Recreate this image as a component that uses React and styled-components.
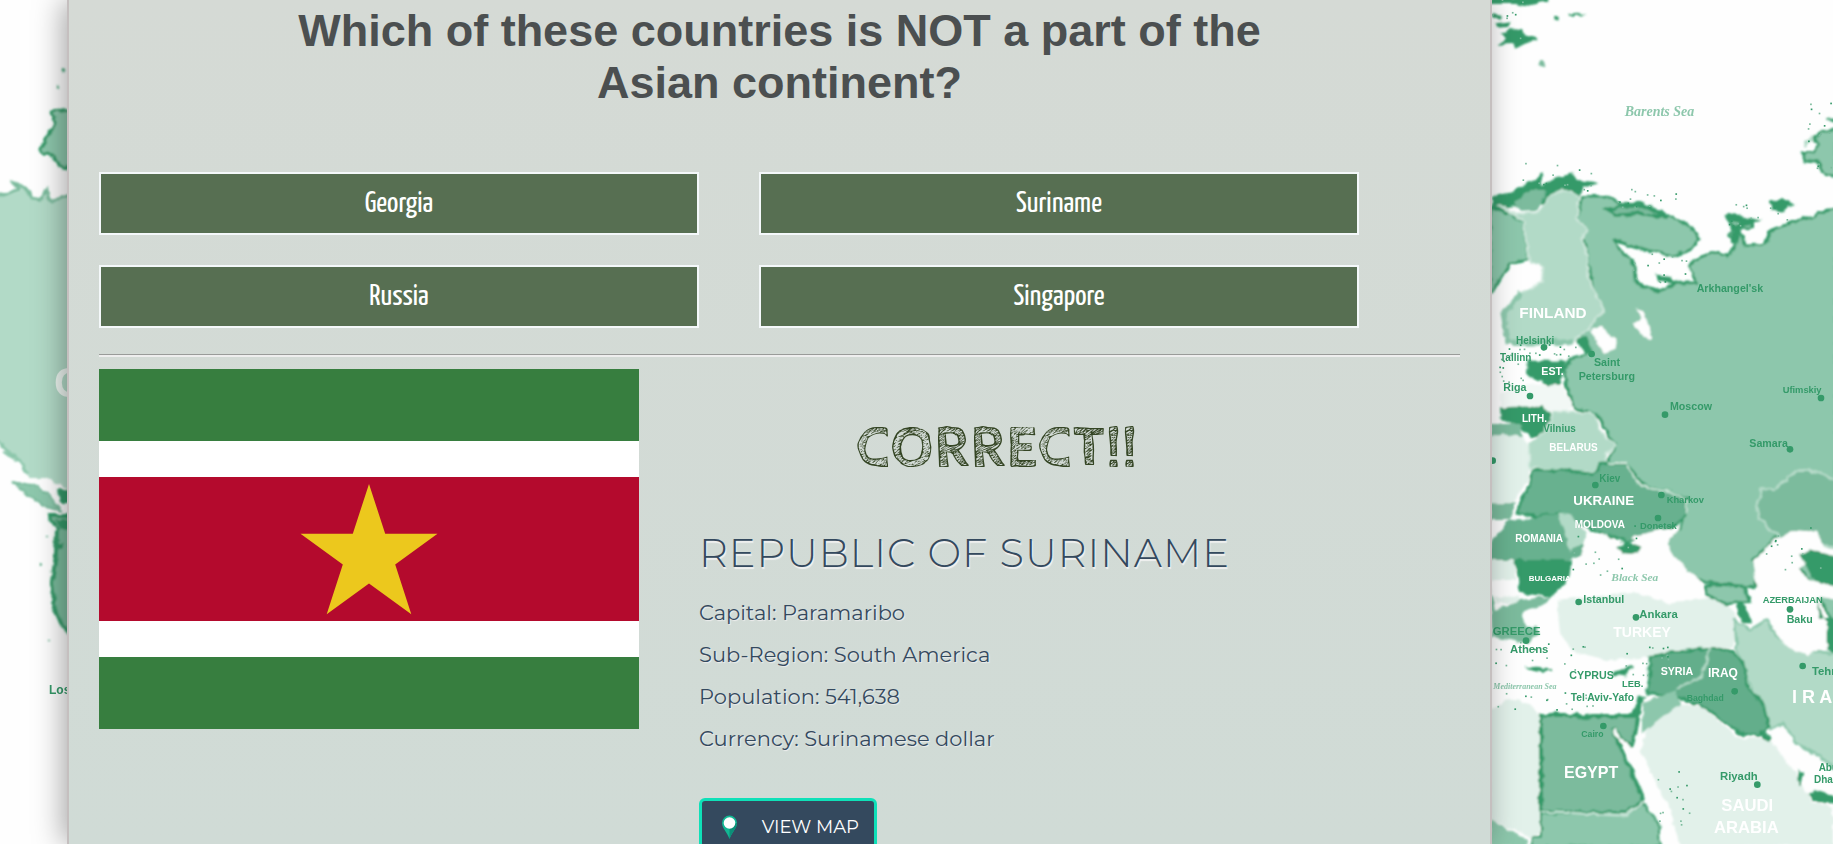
import React from "react";
import styled, { createGlobalStyle } from "styled-components";

const GlobalStyle = createGlobalStyle`
  *, *::before, *::after { box-sizing: border-box; }
  html, body { margin: 0; padding: 0; background: #fefefe; }
`;

const rounded = '"Montserrat", "Inter", "Liberation Sans", sans-serif';

const Page = styled.div`
  display: grid;
  grid-template-columns: 67px minmax(0, 1fr) 341px;
  grid-template-rows: minmax(0, 1fr);
  height: 100vh;
  overflow: hidden;
  background: #fefefe;
`;

const MapSide = styled.svg`
  display: block;
  width: 100%;
  height: 100%;
`;

const Panel = styled.main`
  position: relative;
  z-index: 1;
  padding: 0 30px 40px;
  border: solid #c5bfbf;
  border-width: 0 2px;
  background: linear-gradient(#d5dad5, #d0dbd6);
  box-shadow: -4px 0 28px rgba(0, 0, 0, 0.35);
`;

const Question = styled.h1`
  max-width: 1020px;
  margin: 0 auto;
  padding-top: 5px;
  color: #4b4f50;
  font: bold 45px/52px "Liberation Sans", Arial, sans-serif;
  text-align: center;
`;

const Answers = styled.div`
  display: grid;
  grid-template-columns: 1fr 1fr;
  gap: 30px 60px;
  margin: 63px 101px 26px 0;
`;

const Answer = styled.button`
  height: 63px;
  padding: 0;
  border: 2px solid #f4f8fa;
  background: #576f52;
  color: #fff;
  font: 30px/36px "Yanone Kaffeesatz", "Liberation Sans Narrow", sans-serif;
  cursor: pointer;
`;

const Divider = styled.hr`
  height: 3px;
  margin: 0 0 12px;
  border: 0;
  border-top: 1px solid #999b99;
  background: #eeeeee;
`;

const Result = styled.section`
  display: flex;
  align-items: flex-start;
  gap: 60px;
`;

const Flag = styled.svg`
  display: block;
  flex: 0 0 540px;
  height: 360px;
`;

const Details = styled.div`
  flex: 0 1 596px;
  padding-top: 46px;
`;

const Verdict = styled.h2`
  margin: 0;
  color: #344524;
  font: 700 60px/68px "Cabin Sketch", Lato, sans-serif;
  letter-spacing: 1px;
  text-align: center;
`;

const CountryName = styled.h3`
  margin: 44px 0 13px;
  color: #34495e;
  font: 300 40px/52px ${rounded};
  letter-spacing: 1px;
  text-shadow: 1px 2px 1px #f2f2f2;
  text-transform: uppercase;
  white-space: nowrap;
`;

const Facts = styled.ul`
  margin: 0 0 38px;
  padding: 0;
  list-style: none;
  color: #34495e;
  font: 400 21px/42px ${rounded};
  text-shadow: 1px 1px 1px #eeeeee;
`;

const MapButton = styled.button`
  display: flex;
  align-items: center;
  justify-content: space-between;
  width: 178px;
  height: 58px;
  padding: 0 15px 0 19px;
  border: 3px solid #0fe0b8;
  border-radius: 6px;
  background: #34495e;
  color: #fff;
  font: 400 18px/24px ${rounded};
  cursor: pointer;
`;

const D = "#349a69";
const M = "#8dc7ac";
const L = "#b2dac7";
const P = "#e2f1ea";
const G = "#7bbb9d";

const Filters = ({ id }) => (
  <defs>
    <filter id={id} x="-5%" y="-5%" width="110%" height="110%">
      <feTurbulence type="fractalNoise" baseFrequency="0.12" numOctaves="2" seed="4" result="n" />
      <feDisplacementMap in="SourceGraphic" in2="n" scale="6" xChannelSelector="R" yChannelSelector="G" />
      <feGaussianBlur stdDeviation="0.9" />
    </filter>
    <filter id={id + "-soft"}>
      <feGaussianBlur stdDeviation="0.7" />
    </filter>
  </defs>
);

/* A land area with a darker shoreline. */
const Land = ({ d, fill = M, edge = D, w = 8 }) => (
  <path d={d} fill={fill} stroke={edge} strokeWidth={w} strokeLinejoin="round" />
);

const labels = [
  ["FINLAND", 178, 955, 46, "#fff"],
  ["Helsinki", 168, 1031, 30, D],
  ["Tallinn", 120, 1082, 30, D],
  ["EST.", 244, 1126, 32, "#fff"],
  ["Riga", 130, 1173, 32, D],
  ["LITH.", 186, 1266, 30, "#fff"],
  ["Vilnius", 250, 1296, 30, D],
  ["BELARUS", 268, 1352, 30, "#fff"],
  ["Saint", 402, 1098, 32, D],
  ["Petersburg", 356, 1140, 32, D],
  ["Moscow", 630, 1230, 32, D],
  ["Arkhangel'sk", 710, 876, 32, D],
  ["Ufimskiy", 968, 1180, 28, D],
  ["Samara", 868, 1340, 32, D],
  ["Kiev", 418, 1445, 30, D],
  ["UKRAINE", 340, 1516, 40, "#fff"],
  ["MOLDOVA", 344, 1584, 30, "#fff"],
  ["ROMANIA", 166, 1626, 30, "#fff"],
  ["Kharkov", 620, 1510, 28, D],
  ["Donetsk", 540, 1586, 28, D],
  ["BULGARIA", 206, 1742, 24, "#fff"],
  ["Istanbul", 370, 1808, 32, D],
  ["Ankara", 538, 1855, 34, D],
  ["TURKEY", 460, 1910, 42, "#fff"],
  ["GREECE", 98, 1904, 34, D],
  ["Athens", 150, 1960, 34, D],
  ["CYPRUS", 328, 2036, 32, D],
  ["LEB.", 486, 2060, 28, D],
  ["Tel Aviv-Yafo", 332, 2102, 31, D],
  ["SYRIA", 602, 2024, 32, "#fff"],
  ["IRAQ", 744, 2032, 36, "#fff"],
  ["Baghdad", 680, 2104, 26, D],
  ["AZERBAIJAN", 908, 1810, 28, D],
  ["Baku", 980, 1870, 32, D],
  ["Tehran", 1056, 2026, 34, D],
  ["I R A N", 996, 2108, 54, "#fff"],
  ["Cairo", 364, 2212, 26, D],
  ["EGYPT", 312, 2335, 48, "#fff"],
  ["Riyadh", 780, 2340, 34, D],
  ["SAUDI", 784, 2432, 50, "#fff"],
  ["ARABIA", 762, 2500, 50, "#fff"],
  ["Abu", 1076, 2312, 30, D],
  ["Dhabi", 1062, 2348, 30, D],
];

const cities = [
  [252, 1042], [395, 1062], [210, 1188], [615, 1244], [1083, 1194], [990, 1348], [98, 1382],
  [406, 1455], [604, 1485], [594, 1554], [356, 1806], [528, 1852], [198, 1922], [990, 1828],
  [1028, 1998], [824, 2074], [430, 2178], [892, 2354],
];

const specks = Array.from({ length: 210 }, (_, i) => {
  const coast = [
    [150, 60, 90, 120], [300, 530, 160, 60], [560, 590, 120, 40], [900, 640, 130, 50],
    [600, 800, 110, 60], [250, 1050, 130, 25], [150, 1110, 60, 90], [1080, 400, 50, 140],
    [430, 1650, 130, 110], [230, 1970, 200, 60], [560, 1980, 90, 60], [640, 2400, 70, 120],
    [1000, 1640, 120, 100], [250, 2100, 200, 40],
  ][i % 14];
  const a = Math.sin(i * 12.99) * 43758.5;
  const b = Math.sin(i * 78.23) * 12543.7;
  return [coast[0] + (a - Math.floor(a) - 0.5) * coast[2] * 1.5, coast[1] + (b - Math.floor(b) - 0.5) * coast[3] * 1.5];
});

function EastMap() {
  return (
    <MapSide viewBox="0 0 341 844" preserveAspectRatio="xMinYMin slice" aria-hidden="true">
      <Filters id="east" />
      <g filter="url(#east)">
        <g transform="translate(-32 0) scale(0.33333)">
          {/* Svalbard and the Arctic islands */}
          <path fill={D} d="M90 -10H265L262 5 235 8 205 20 170 12 90 12ZM96 42L128 48 118 58 96 60ZM104 70L155 64 150 80 108 84ZM120 98L160 88 186 90 192 106 234 116 198 128 186 134 170 146 158 132 116 134 138 112ZM326 42L352 38 380 46 330 48ZM282 50H296V64H284Z" />
          <circle cx="246" cy="191" r="8" fill={G} />
          <Land d="M1130 390L1085 394 1062 414 1076 436 1060 456 1032 458 1032 480 1070 484 1098 524 1130 530Z" />
          <path d="M1030 430L1056 404 1060 416 1040 440Z" fill={L} />
          <path d="M1100 358L1130 350V368Z" fill={D} />
          <path d="M934 612L962 596 996 612 968 634 938 628Z" fill={D} stroke={D} strokeWidth="8" />
          {/* Russia */}
          <Land d="M360 620L365 590 440 588 480 610 540 610 600 635 690 680 718 715 690 750 640 768 560 750 500 732 460 718 480 750 522 790 525 845 560 860 600 876 640 850 710 848 700 820 685 800 700 780 760 757 805 768 826 735 806 705 820 680 798 648 876 660 876 684 836 692 858 738 915 732 928 694 1000 665 1060 650 1100 630 1130 628V1900L1060 1750 1010 1700 950 1610 880 1680 905 1730 880 1762 730 1745 640 1690 590 1620 660 1585 685 1495 550 1455 500 1390 440 1390 465 1335 410 1240 345 1225 320 1160 312 1110 330 1075 390 1060 350 1020 430 930 400 880 385 770 350 650Z" />
          <path d="M440 628L470 646 540 640 620 652 560 620 500 618Z" fill={G} stroke={D} strokeWidth="10" />
          <path d="M800 648L870 664 830 680 822 730" fill="none" stroke={D} strokeWidth="20" />
          <path d="M590 828L630 832 640 842 600 842Z" fill={D} stroke={D} strokeWidth="8" />
          {/* Scandinavia and Finland */}
          <path d="M96 590L150 578 200 550 250 516 240 560 300 530 340 520 350 540 400 545 415 550 370 565 350 600 96 630Z" fill={D} />
          <path d="M160 610L210 570 260 570 230 630 180 632Z" fill={G} />
          <Land d="M90 620L150 640 190 665 205 780 150 790 120 840 96 880 90 880Z" />
          <Land fill={L} edge="#cfe8dc" w={6} d="M110 612L170 642 240 634 262 590 310 568 360 590 350 650 380 690 365 720 385 770 385 830 405 880 432 930 390 980 340 1026 150 1030 130 940 180 880 245 845 250 800 205 780 190 662Z" />
          <path d="M145 1032L130 940 185 875M150 1030L340 1026" fill="none" stroke={M} strokeWidth="16" />
          <path d="M524 928L552 934 574 1002 576 1018 548 1010 518 970 545 952ZM388 990L420 982 470 1024 466 1046 432 1060 414 1030Z" fill="#fefefe" />
          <path d="M352 1018L380 1010 398 1055 375 1058Z" fill={D} />
          {/* Baltic states and Poland */}
          <path d="M120 1180L220 1150 310 1160 340 1225 300 1250 120 1240Z" fill="#f2f8f5" />
          <path d="M200 1082L320 1082 308 1120 300 1158 270 1156 198 1128Z" fill={D} />
          <path d="M120 1222L250 1218 280 1250 262 1300 210 1312 180 1280 122 1260Z" fill={D} />
          <path d="M90 1272H180L190 1310H90Z" fill={G} />
          <path d="M90 1305L190 1308 210 1370 205 1440 160 1510H90Z" fill={P} />
          <Land fill={L} edge="#cfe8dc" w={5} d="M280 1235L405 1240 420 1290 465 1335 440 1360 435 1390 400 1420 210 1402 205 1330 260 1290Z" />
          {/* Ukraine and the Balkans */}
          <Land fill="#68b18f" d="M215 1410L300 1410 400 1424 420 1392 500 1390 520 1425 545 1458 620 1472 680 1500 680 1545 640 1580 500 1625 360 1575 300 1540 230 1550 170 1540 185 1500 208 1460Z" />
          <path d="M440 1390L500 1388 518 1424 545 1458 620 1472 682 1500 680 1545" fill="none" stroke="#d3eade" strokeWidth="6" />
          <path d="M90 1510H165L150 1560 90 1560Z" fill={G} />
          <path d="M150 1560L210 1555 300 1540 355 1610 380 1650 330 1680 170 1700 90 1680 90 1630Z" fill="#68b18f" />
          <path d="M295 1540L330 1545 380 1600 370 1630 330 1650Z" fill={L} />
          <path d="M165 1680H340L320 1745 270 1790 180 1780Z" fill={D} />
          <path d="M90 1680H165V1740H90ZM105 1790H180L170 1810H105Z" fill={P} />
          <path d="M90 1760L105 1830 180 1800 270 1790 260 1810 180 1840 200 1880 230 1880 235 1905 200 1930 96 1910Z" fill={G} />
          {/* Black Sea */}
          <path d="M350 1680L380 1620 440 1600 480 1640 540 1630 510 1610 600 1590 660 1585 620 1630 650 1680 720 1740 730 1780 700 1805 620 1805 520 1770 420 1780 330 1790Z" fill="#fefefe" />
          <path d="M470 1640L500 1625 545 1645 520 1662 490 1660Z" fill={D} />
          {/* Turkey and the Middle East */}
          <path d="M290 1800L420 1785 520 1775 620 1808 790 1790 830 1850 820 1940 720 1950 600 1970 440 1980 340 1955 300 1900Z" fill={P} />
          <Land fill={M} w={8} d="M735 1755L850 1760 870 1805 800 1812 740 1785Z" />
          <path d="M840 1800L880 1870 850 1870 830 1830Z" fill={D} />
          <Land fill={L} edge={M} w={8} d="M825 1860L870 1890 920 1860 950 1910 1010 1950 1130 1960V2310L1080 2270 1010 2230 970 2170 930 2190 880 2080 830 1950Z" />
          <Land fill="#63ae8b" d="M570 1970L620 1960 740 1945 770 1945 820 1955 855 2000 860 2060 910 2110 925 2180 900 2210 840 2200 730 2120 650 2090 560 2080 570 2030Z" />
          <path d="M750 1945L725 2030 650 2065" fill="none" stroke="#b7dcca" strokeWidth="7" />
          <path d="M550 2110L650 2070 660 2110 600 2170 545 2200Z" fill={M} />
          <path d="M660 2110L730 2125 830 2212 930 2220 1000 2310 1060 2410 1119 2420V2540H660L630 2430 540 2250 560 2190Z" fill={P} />
          <path d="M900 2190L930 2220 910 2210" fill="none" stroke={D} strokeWidth="14" />
          {/* Egypt and Libya */}
          <path d="M90 2130L150 2095 210 2110 240 2150V2500L210 2510 90 2460Z" fill={P} />
          <Land fill={G} w={12} d="M243 2145L350 2145 360 2155 400 2148 520 2148 540 2100 530 2180 515 2240 490 2220 460 2190 480 2240 540 2370 548 2400 500 2440 243 2435Z" />
          <path d="M460 2190L510 2250 540 2300 500 2240Z" fill="#fefefe" stroke="#fefefe" strokeWidth="8" />
          <Land d="M243 2440L500 2445 548 2410 595 2470 600 2540H215V2510H243Z" w={6} />
          <path d="M243 2436L500 2446 548 2405" fill="none" stroke="#c5e3d5" strokeWidth="8" />
          <path d="M90 2460L200 2515V2540H90Z" fill={M} />
          {/* Caspian region */}
          <Land fill={G} w={8} edge="#b7dcca" d="M1130 1440L1060 1412 1010 1412 940 1470 905 1465 890 1530 900 1560 950 1600 960 1630 1130 1640Z" />
          <path d="M880 1685L940 1620 1000 1590 1070 1595 1090 1640 1130 1650V1720L1040 1690 1010 1710 1050 1740 1130 1760V1800L1080 1790 1095 1850 1100 1940 1040 1965 980 1940 940 1890 950 1830 900 1800Z" fill="#fefefe" />
          <path d="M1020 1660L1060 1650 1130 1670V1760L1060 1740Z" fill={D} />
          <path d="M1065 1790L1080 1850 1130 1860V1960L1100 1950 1100 1870Z" fill={D} />
          <path d="M195 2002L270 2010 230 2016ZM460 2022L520 2000 490 2026ZM535 2090L550 2090 525 2150ZM1015 2310L1030 2320 1020 2360Z" fill={D} stroke={D} strokeWidth="5" />
          <path d="M1045 2385L1060 2370 1130 2390V2410L1070 2410Z" fill={D} />
        </g>
      </g>
      <g filter="url(#east-soft)">
        <g transform="translate(-32 0) scale(0.33333)" fontFamily="Liberation Sans, Arial, sans-serif">
          {specks.map(([x, y], i) => <rect key={i} x={x} y={y} width="5" height="5" fill={i % 3 ? G : D} />)}
          {cities.map(([x, y]) => <circle key={x + "-" + y} cx={x} cy={y} r="10" fill={D} />)}
          <g fill={M} fontFamily="Liberation Serif, serif" fontStyle="italic" fontWeight="bold">
            <text x="494" y="349" fontSize="42">Barents Sea</text>
            <text x="454" y="1744" fontSize="34">Black Sea</text>
            <text x="100" y="2068" fontSize="24">Mediterranean Sea</text>
          </g>
          {labels.map(([t, x, y, size, fill]) => (
            <text key={t} x={x} y={y} fontSize={size} fill={fill} fontWeight="700">{t}</text>
          ))}
        </g>
      </g>
    </MapSide>
  );
}

function WestMap() {
  return (
    <MapSide viewBox="0 0 67 844" preserveAspectRatio="xMinYMin slice" aria-hidden="true">
      <Filters id="west" />
      <g filter="url(#west)">
        <Land fill={M} w={3} d="M72 109L62 110 50 111 55 117 53 128 39 150 52 156 60 166 72 169Z" />
        <path d="M-5 193L8 196 20 190 14 183 24 187 33 197 40 201 48 190 48 200 56 200 72 194V490L60 486 48 478 30 478 20 462 8 456 -5 438Z" fill={L} />
        <path d="M-5 195L8 195 18 189 14 183 24 187 33 198 40 201 47 190 49 200 58 199 72 194" fill="none" stroke={G} strokeWidth="3" />
        <path d="M-5 438L6 450 20 460 28 474M2 452L14 458" fill="none" stroke={M} strokeWidth="3" />
        <path d="M12 482L32 485 50 495 60 510 46 507 28 494Z" fill={M} stroke={G} strokeWidth="2" />
        <path d="M57 489H72V503H60Z" fill={D} />
        <Land fill={G} w={4} d="M72 516L49 516 57 530 56 556 52 582 55 610 61 624 72 636Z" />
        <path d="M56 520H72V530H60ZM58 542H64V548H58Z" fill={D} />
        <path d="M61 69L64 70M57 87L60 88M47 640H50M40 565H42M45 536H47" stroke={D} strokeWidth="2" />
      </g>
      <g filter="url(#west-soft)" fontFamily="Liberation Sans, Arial, sans-serif" fontWeight="700">
        <text x="54" y="397" fontSize="42" fill="#edf6f1">C</text>
        <text x="49" y="694" fontSize="12" fill={D}>Los</text>
      </g>
    </MapSide>
  );
}

const answers = ["Georgia", "Suriname", "Russia", "Singapore"];
const facts = [
  ["Capital", "Paramaribo"],
  ["Sub-Region", "South America"],
  ["Population", "541,638"],
  ["Currency", "Surinamese dollar"],
];

export default function App() {
  return (
    <>
      <GlobalStyle />
      <Page>
        <WestMap />
        <Panel>
          <Question>Which of these countries is NOT a part of the Asian continent?</Question>
          <Answers>
            {answers.map((name) => <Answer key={name} type="button">{name}</Answer>)}
          </Answers>
          <Divider />
          <Result>
            <Flag viewBox="0 0 540 360" role="img" aria-label="Flag of Suriname">
              <path fill="#377e3f" d="M0 0H540V360H0Z" />
              <path fill="#fff" d="M0 72H540V288H0Z" />
              <path fill="#b40a2d" d="M0 108H540V252H0Z" />
              <path fill="#ecc81d" d="M270 115L286.200 164.700H338.500L296.200 195.500L312.300 245.200L270 214.500L227.700 245.200L243.800 195.500L201.500 164.700H253.800Z" />
            </Flag>
            <Details>
              <Verdict>CORRECT!!</Verdict>
              <CountryName>Republic of Suriname</CountryName>
              <Facts>
                {facts.map(([label, value]) => <li key={label}>{label}: {value}</li>)}
              </Facts>
              <MapButton type="button">
                <svg width="17" height="24" viewBox="0 0 17 24" aria-hidden="true">
                  <path d="M1 8A7.500 7.500 0 0 1 16 8C16 13 11 17 8.500 24C6 17 1 13 1 8Z" fill="#12b894" />
                  <path d="M8.500 8H16C16 13 11 17 8.500 24Z" fill="#0b8f78" />
                  <circle cx="8.500" cy="8" r="5.800" fill="#fff" />
                </svg>
                VIEW MAP
              </MapButton>
            </Details>
          </Result>
        </Panel>
        <EastMap />
      </Page>
    </>
  );
}
